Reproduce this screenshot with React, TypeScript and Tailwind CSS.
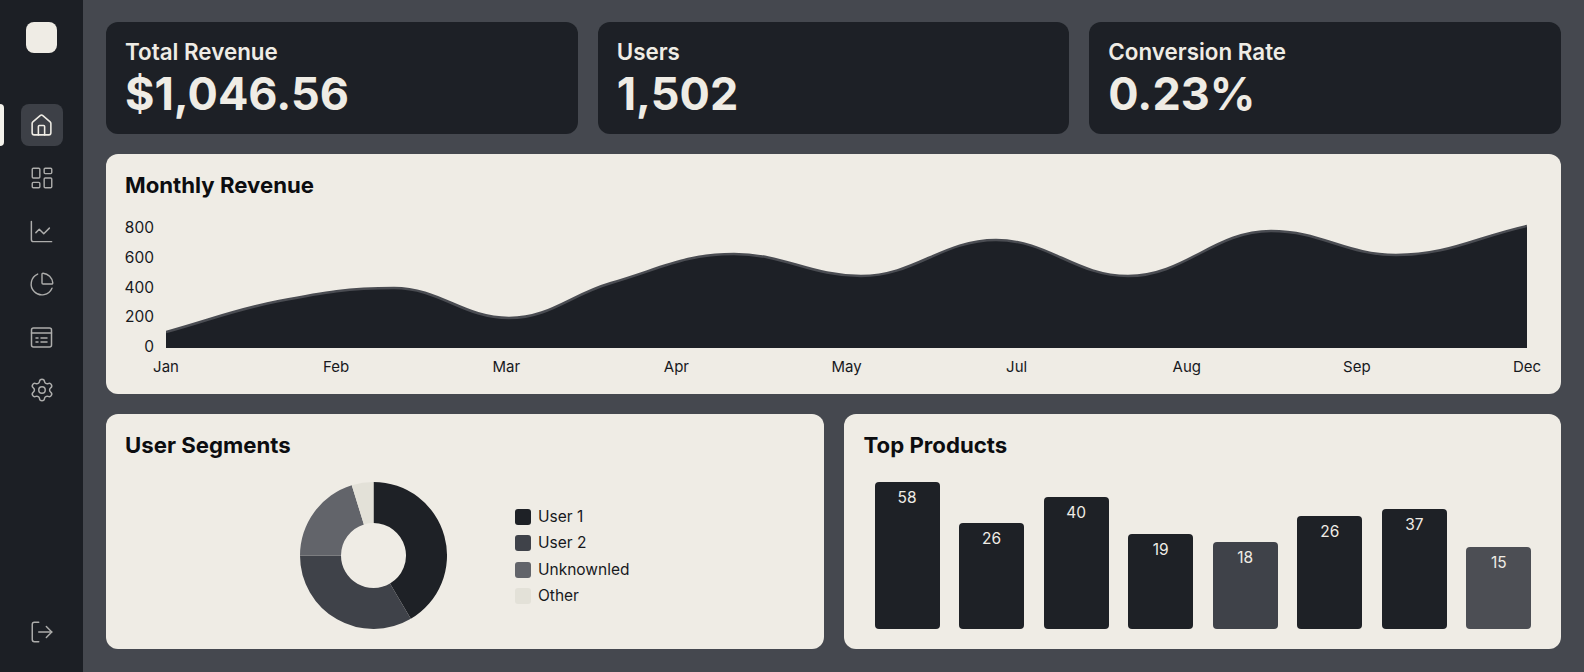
import React from 'react'
import { House, LayoutDashboard, ChartLine, ChartPie, Settings, LogOut } from 'lucide-react'

const stats = [
	{ label: 'Total Revenue', value: '$1,046.56' },
	{ label: 'Users', value: '1,502' },
	{ label: 'Conversion Rate', value: '0.23%' },
]

// points of the revenue curve, relative to the top left of the plot
const curve: [number, number][] = [
	[0, 115], [113, 84], [228, 71], [343, 101], [445, 66], [568, 37],
	[695, 59], [830, 23], [962, 59], [1105, 14], [1230, 38], [1361, 9],
]

// flat at the peaks and troughs, so the wave stays soft
const smoothPath = (pts: [number, number][]) => {
	const slope = (i: number) => {
		if (i === 0 || i === pts.length - 1) {
			const a = pts[i === 0 ? 0 : i - 1]
			const b = pts[i === 0 ? 1 : i]
			return (b[1] - a[1]) / (b[0] - a[0])
		}
		const s1 = (pts[i][1] - pts[i - 1][1]) / (pts[i][0] - pts[i - 1][0])
		const s2 = (pts[i + 1][1] - pts[i][1]) / (pts[i + 1][0] - pts[i][0])
		return s1 * s2 <= 0 ? 0 : (s1 + s2) / 2
	}
	let d = `M${pts[0][0]} ${pts[0][1]}`
	for (let i = 0; i < pts.length - 1; i++) {
		const [x1, y1] = pts[i]
		const [x2, y2] = pts[i + 1]
		const h = (x2 - x1) * 0.4
		d += ` C${x1 + h} ${y1 + slope(i) * h} ${x2 - h} ${y2 - slope(i + 1) * h} ${x2} ${y2}`
	}
	return d
}

const months = ['Jan', 'Feb', 'Mar', 'Apr', 'May', 'Jul', 'Aug', 'Sep', 'Dec']

const segments = [
	{ from: 0, to: 149.5, color: '#1e2126' },
	{ from: 149.5, to: 270, color: '#3f4249' },
	{ from: 270, to: 342.8, color: '#62646a' },
	{ from: 342.8, to: 360, color: '#e3e1d8' },
]

const legend = [
	{ name: 'User 1', color: '#1e2126' },
	{ name: 'User 2', color: '#3f4249' },
	{ name: 'Unknownled', color: '#62646a' },
	{ name: 'Other', color: '#e3e1d8' },
]

const products = [
	{ value: 58, height: 147, color: '#1e2126' },
	{ value: 26, height: 106, color: '#1e2126' },
	{ value: 40, height: 132, color: '#1e2126' },
	{ value: 19, height: 95, color: '#1e2126' },
	{ value: 18, height: 87, color: '#3f4249' },
	{ value: 26, height: 113, color: '#1e2126' },
	{ value: 37, height: 120, color: '#1e2126' },
	{ value: 15, height: 82, color: '#4c4e54' },
]

const arcPath = (from: number, to: number, r1: number, r2: number, c: number) => {
	const pt = (a: number, r: number) => {
		const t = (a * Math.PI) / 180
		return `${c + r * Math.sin(t)} ${c - r * Math.cos(t)}`
	}
	const large = to - from > 180 ? 1 : 0
	return `M${pt(from, r1)} A${r1} ${r1} 0 ${large} 1 ${pt(to, r1)} L${pt(to, r2)} A${r2} ${r2} 0 ${large} 0 ${pt(from, r2)} Z`
}

const BillIcon = () => (
	<svg width="23" height="23" viewBox="0 0 23 23" fill="none" stroke="currentColor" strokeWidth="1.5" strokeLinecap="round">
		<rect x="1.5" y="2" width="20" height="19" rx="2" />
		<path d="M1.5 7h20M6 12h2M11 12h6M6 16h2M11 16h6" />
	</svg>
)

const App = () => {
	return (
		<div className="flex h-screen overflow-hidden bg-[#45484f] font-['Inter',sans-serif]">
			<aside className="relative flex w-[83px] shrink-0 flex-col items-center bg-[#1c1f25] pt-[22px] pb-[19px] text-[#adadac]">
				<div className="h-[31px] w-[31px] rounded-lg bg-[#efece5]" />
				<div className="absolute left-0 top-[104px] h-[42px] w-[4px] rounded-r-sm bg-[#f4f2ec]" />
				<nav className="mt-[51px] flex flex-col gap-[11px]">
					<div className="flex h-[42px] w-[42px] items-center justify-center rounded-lg bg-[#3d4047] text-[#efece5]">
						<House size={25} strokeWidth={1.5} />
					</div>
					<div className="flex h-[42px] w-[42px] items-center justify-center"><LayoutDashboard size={26} strokeWidth={1.3} /></div>
					<div className="flex h-[42px] w-[42px] items-center justify-center"><ChartLine size={27} strokeWidth={1.3} /></div>
					<div className="flex h-[42px] w-[42px] items-center justify-center"><ChartPie size={26} strokeWidth={1.3} /></div>
					<div className="flex h-[42px] w-[42px] items-center justify-center"><BillIcon /></div>
					<div className="flex h-[42px] w-[42px] items-center justify-center"><Settings size={26} strokeWidth={1.35} /></div>
				</nav>
				<div className="mt-auto flex h-[42px] w-[42px] items-center justify-center"><LogOut size={26} strokeWidth={1.35} /></div>
			</aside>

			<main className="flex flex-1 flex-col gap-5 pt-[22px] pr-[23px] pl-[23px]">
				<div className="grid grid-cols-3 gap-5">
					{stats.map((s) => (
						<div key={s.label} className="h-[112px] rounded-xl bg-[#1d2026] pt-[19px] pl-[19px] text-[#efece5]">
							<p className="text-[22.4px] leading-[22px] font-semibold">{s.label}</p>
							<p className="mt-[5px] text-[45px] leading-[52px] font-bold">{s.value}</p>
						</div>
					))}
				</div>

				<section className="h-[240px] rounded-xl bg-[#efece5] pt-5 pl-[19px]">
					<h2 className="text-[22.2px] leading-[22px] font-bold text-[#0c0d10]">Monthly Revenue</h2>
					<div className="mt-[21px] flex h-[140px]">
						<div className="flex w-[29px] flex-col items-end justify-between pt-[1px] text-[15.5px] leading-[20px] text-[#17191d]">
							<span>800</span>
							<span>600</span>
							<span>400</span>
							<span>200</span>
							<span>0</span>
						</div>
						<svg className="ml-[12px] shrink-0" width="1361" height="140" viewBox="0 0 1361 140">
							<path d={`${smoothPath(curve)} L1361 131 L0 131 Z`} fill="#1d2026" />
							<path d={smoothPath(curve)} fill="none" stroke="#4a4c52" strokeWidth="2.5" />
						</svg>
					</div>
					<div className="ml-[41px] flex w-[1361px] justify-between text-[15px] leading-[20px] text-[#17191d]">
						{months.map((m) => (
							<span key={m} className="flex w-0 justify-center">{m}</span>
						))}
					</div>
				</section>

				<div className="grid grid-cols-2 gap-5">
					<section className="h-[235px] rounded-xl bg-[#efece5] pt-5 pl-[19px]">
						<h2 className="text-[22.2px] leading-[22px] font-bold text-[#0c0d10]">User Segments</h2>
						<div className="mt-[26px] flex items-center">
							<svg className="ml-[175px]" width="147" height="148" viewBox="0 0 147 148">
								{segments.map((seg) => (
									<path key={seg.color} d={arcPath(seg.from, seg.to, 73.5, 32.5, 73.5)} fill={seg.color} />
								))}
							</svg>
							<ul className="ml-[68px] flex flex-col gap-[6.3px] pt-[1px]">
								{legend.map((l) => (
									<li key={l.name} className="flex items-center gap-[7px] text-[15.5px] leading-[20px] text-[#17191d]">
										<span className="h-4 w-4 rounded-[3px]" style={{ backgroundColor: l.color }} />
										{l.name}
									</li>
								))}
							</ul>
						</div>
					</section>

					<section className="h-[235px] rounded-xl bg-[#efece5] pt-5 pl-5">
						<h2 className="text-[22.2px] leading-[22px] font-bold text-[#0c0d10]">Top Products</h2>
						<div className="mt-[26px] ml-[11px] flex h-[147px] w-[657px] items-end justify-between">
							{products.map((p, i) => (
								<div
									key={i}
									className="flex w-[65px] justify-center rounded-[4px] pt-[6px] text-[15.5px] leading-[20px] text-[#efece5]"
									style={{ height: p.height, backgroundColor: p.color }}
								>
									{p.value}
								</div>
							))}
						</div>
					</section>
				</div>
			</main>
		</div>
	)
}

export default App
